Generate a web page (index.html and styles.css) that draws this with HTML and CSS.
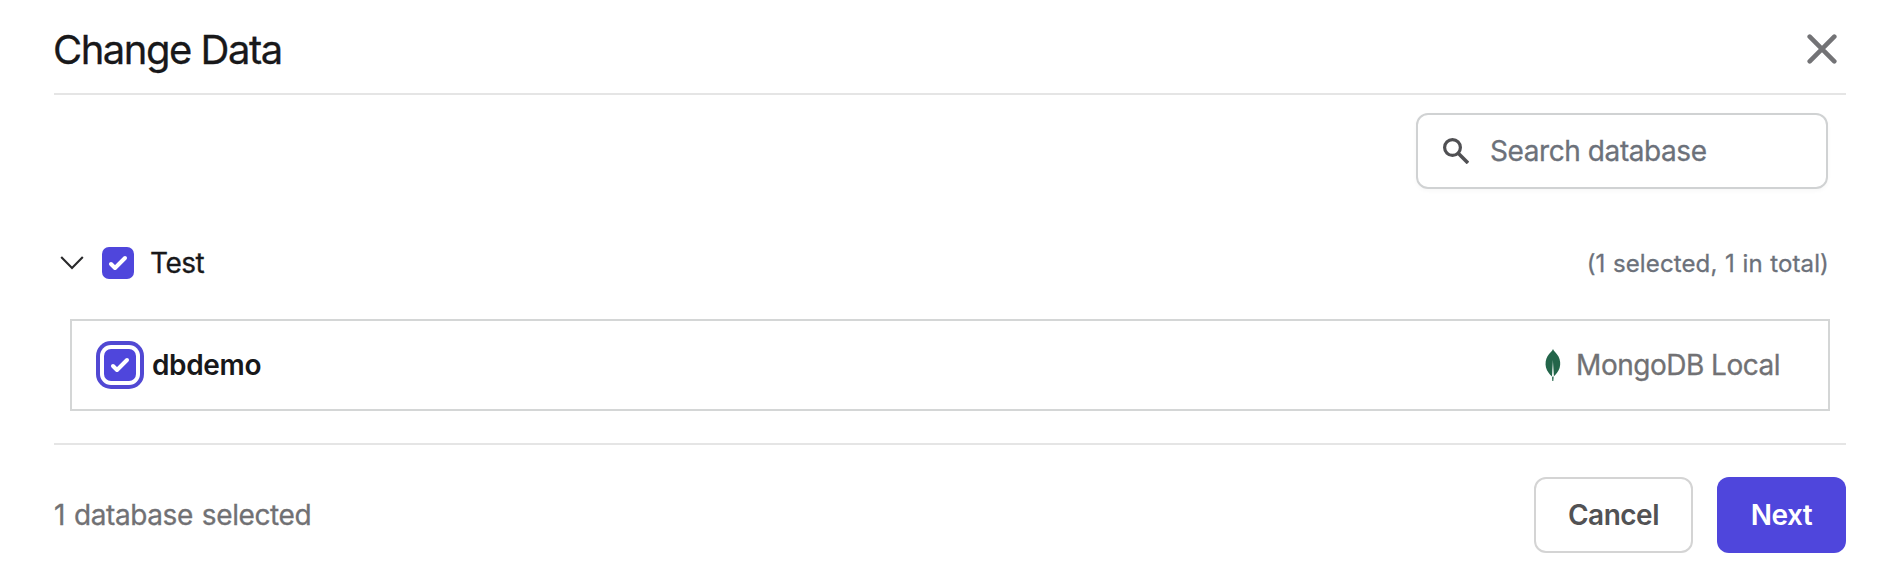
FILE: index.html
```html
<!DOCTYPE html>
<html lang="en">
<head>
<meta charset="utf-8">
<title>Change Data</title>
<link rel="stylesheet" href="styles.css">
</head>
<body>
<main class="dialog">
  <header class="header">
    <h1 class="title"><span>Change Data</span></h1>
    <button class="close" aria-label="Close">
      <svg width="30" height="30" viewBox="0 0 30 30" fill="none" stroke="currentColor" stroke-width="4.6" stroke-linecap="round"><path d="M2.700 2.700 27.300 27.300M27.300 2.700 2.700 27.300"/></svg>
    </button>
  </header>
  <section class="content">
    <div class="search">
      <svg class="search-icon" width="26" height="26" viewBox="0 0 26 26" fill="none" stroke="currentColor"><circle cx="9.5" cy="9.5" r="7.9" stroke-width="3.2"/><path d="M15 15 25 25" stroke-width="3.6"/></svg>
      <span class="search-text">Search database</span>
    </div>
    <div class="group">
      <svg class="chevron" width="24" height="14" viewBox="0 0 24 14" fill="none" stroke="currentColor" stroke-width="2.1"><path d="M1.2 1 12 12 22.8 1"/></svg>
      <span class="checkbox"><svg width="32" height="32" viewBox="0 0 32 32" fill="none" stroke="#fff" stroke-width="4" stroke-linecap="round" stroke-linejoin="round"><path d="M9 17 13 21 23 11"/></svg></span>
      <span class="group-name">Test</span>
      <span class="count">(1 selected, 1 in total)</span>
    </div>
    <div class="card">
      <span class="checkbox focused"><svg width="32" height="32" viewBox="0 0 32 32" fill="none" stroke="#fff" stroke-width="4" stroke-linecap="round" stroke-linejoin="round"><path d="M9 17 13 21 23 11"/></svg></span>
      <span class="db-name">dbdemo</span>
      <span class="source">
        <svg class="leaf" width="16" height="32" viewBox="0 0 16 32"><path fill="#23654a" d="M8 0C8.8 2.3 11.5 4 13.5 7.6C15.3 11 15.8 15.5 14.6 19C13.4 22.6 11 25.3 8.7 27.5L8.3 32H7.3L7 27.5C4.5 25.3 2 22.3 1 18.5C0 14.5 .7 10.5 2.5 7.3C4.5 4 7.2 2.3 8 0Z"/><path fill="#fff" d="M7.9 11 8.9 27 8 28.5 7 27Z"/></svg>
        <span class="source-name">MongoDB Local</span>
      </span>
    </div>
  </section>
  <footer class="footer">
    <span class="summary">1 database selected</span>
    <button class="button cancel">Cancel</button>
    <button class="button next">Next</button>
  </footer>
</main>
</body>
</html>
```
FILE: styles.css
```css
* { box-sizing: border-box; }
body {
  margin: 0;
  background: #fff;
  color: #18181a;
  font-family: Inter, "Liberation Sans", sans-serif;
  font-size: 28px;
  font-weight: 400;
  line-height: 34px;
  -webkit-text-stroke: 0.3px currentColor;
}
svg { display: block; flex: none; }
button { font: inherit; margin: 0; }
.dialog { height: 580px; padding: 0 52px 0 54px; white-space: nowrap; }
.header {
  display: flex;
  justify-content: space-between;
  align-items: center;
  height: 95px;
  padding: 5px 9px 0 0;
  border-bottom: 2px solid #e5e5e5;
}
.title { margin: 1px 0 0 -1px; font-size: 40px; line-height: 48px; font-weight: 400; letter-spacing: -1.5px; }
.close { padding: 0; border: 0; background: none; color: #737376; }
.content {
  display: flex;
  flex-direction: column;
  height: 350px;
  padding: 18px 16px 0;
  border-bottom: 2px solid #e5e5e5;
}
.search {
  display: flex;
  align-items: center;
  align-self: flex-end;
  width: 412px;
  height: 76px;
  margin-right: 2px;
  padding-left: 25px;
  border: 2px solid #d0d2d3;
  border-radius: 12px;
  box-shadow: 0 2px 4px #00000008;
}
.search-icon { color: #505053; }
.search-text { margin-left: 21px; color: #6c717a; letter-spacing: -0.42px; }
.group { display: flex; align-items: center; height: 32px; margin: 58px 2px 40px -10px; }
.chevron { color: #29292b; }
.checkbox { flex: none; width: 32px; height: 32px; margin-left: 18px; border-radius: 7px; background: #4f46dc; }
.group-name { margin-left: 16px; letter-spacing: -0.5px; }
.count { margin: 2px -1px 0 auto; color: #6c717a; font-size: 24px; letter-spacing: 0.12px; word-spacing: 0.7px; }
.card {
  display: flex;
  align-items: center;
  height: 92px;
  padding: 0 48px 0 32px;
  border: 2px solid #d4d6d6;
}
.focused { margin-left: 0; box-shadow: 0 0 0 4px #fff, 0 0 0 8px #5148d3; }
.db-name { margin-left: 16px; font-weight: 600; letter-spacing: -0.35px; -webkit-text-stroke-width: 0; }
.source { display: flex; align-items: center; margin-left: auto; color: #717174; }
.source-name { margin-left: 15px; letter-spacing: -0.5px; }
.footer { display: flex; align-items: center; padding-top: 32px; }
.summary { margin-right: auto; color: #717174; letter-spacing: -0.4px; word-spacing: 1.5px; }
.button { height: 76px; padding: 0; border-radius: 12px; font-weight: 600; letter-spacing: -0.5px; -webkit-text-stroke-width: 0; }
.cancel { width: 159px; border: 2px solid #d4d4d4; background: #fff; color: #525254; }
.next { width: 129px; margin-left: 24px; border: 0; background: #4f46dc; color: #fff; }
```
